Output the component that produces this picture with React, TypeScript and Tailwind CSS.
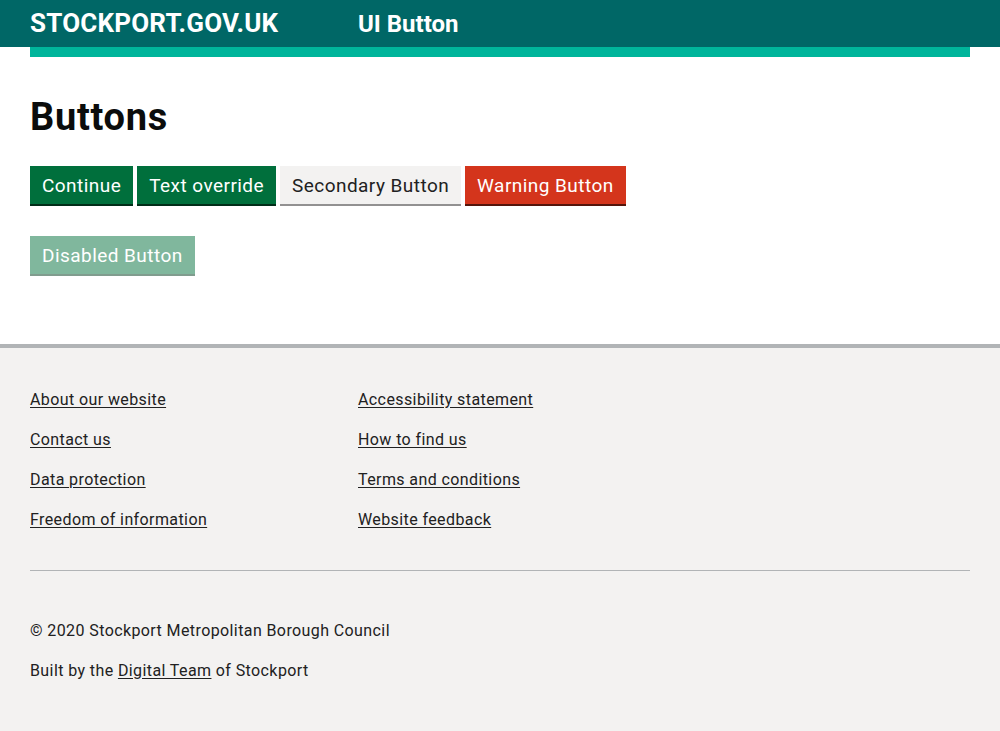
const font = { fontFamily: "Roboto, 'Noto Sans', sans-serif" };

function Btn({ label, kind }: { label: string; kind: "primary" | "secondary" | "warning" | "disabled" }) {
  const styles = {
    primary: "bg-[#006f3c] text-white shadow-[0_2px_0_#002d18]",
    secondary: "bg-[#f3f2f1] text-[#212121] shadow-[0_2px_0_#929191]",
    warning: "bg-[#d4351c] text-white shadow-[0_2px_0_#55150b]",
    disabled: "bg-[#80b79d] text-white shadow-[0_2px_0_#809c8e]",
  }[kind];
  return (
    <button className={`h-[38px] px-3 text-[19px] tracking-[0.45px] leading-none ${styles}`} disabled={kind === "disabled"}>
      {label}
    </button>
  );
}

const leftLinks = ["About our website", "Contact us", "Data protection", "Freedom of information"];
const rightLinks = ["Accessibility statement", "How to find us", "Terms and conditions", "Website feedback"];

export default function App() {
  return (
    <div className="min-h-screen bg-white text-[#0b0c0c]" style={font}>
      <header className="bg-[#006766]">
        <div className="h-[47px] px-[30px] flex items-center">
          <span className="text-white font-bold text-[26px] tracking-[0.2px] w-[328px]">STOCKPORT.GOV.UK</span>
          <span className="text-white font-bold text-[24px]">UI Button</span>
        </div>
      </header>
      <div className="mx-[30px] h-[10px] bg-[#00b59b]" />

      <main className="px-[30px] pt-[40px] pb-[70px]">
        <h1 className="text-[38px] font-bold leading-[40px] tracking-[0.7px] text-[#0b0c0c]">Buttons</h1>
        <div className="mt-[29px] flex gap-1">
          <Btn label="Continue" kind="primary" />
          <Btn label="Text override" kind="primary" />
          <Btn label="Secondary Button" kind="secondary" />
          <Btn label="Warning Button" kind="warning" />
        </div>
        <div className="mt-[32px] flex">
          <Btn label="Disabled Button" kind="disabled" />
        </div>
      </main>

      <footer className="border-t-4 border-[#b1b4b6] bg-[#f3f2f1] px-[30px] pt-[41px] pb-[50px] text-[16px] tracking-[0.4px] text-[#212121]">
        <div className="flex">
          <ul className="w-[328px] flex flex-col gap-[19px]">
            {leftLinks.map((l) => (
              <li key={l} className="leading-[21px]">
                <a href="#" className="underline underline-offset-2">{l}</a>
              </li>
            ))}
          </ul>
          <ul className="flex flex-col gap-[19px]">
            {rightLinks.map((l) => (
              <li key={l} className="leading-[21px]">
                <a href="#" className="underline underline-offset-2">{l}</a>
              </li>
            ))}
          </ul>
        </div>
        <hr className="mt-[40px] border-0 border-t border-[#b1b4b6]" />
        <p className="mt-[49px] leading-[21px]">© 2020 Stockport Metropolitan Borough Council</p>
        <p className="mt-[19px] leading-[21px]">
          Built by the <a href="#" className="underline underline-offset-2">Digital Team</a> of Stockport
        </p>
      </footer>
    </div>
  );
}
